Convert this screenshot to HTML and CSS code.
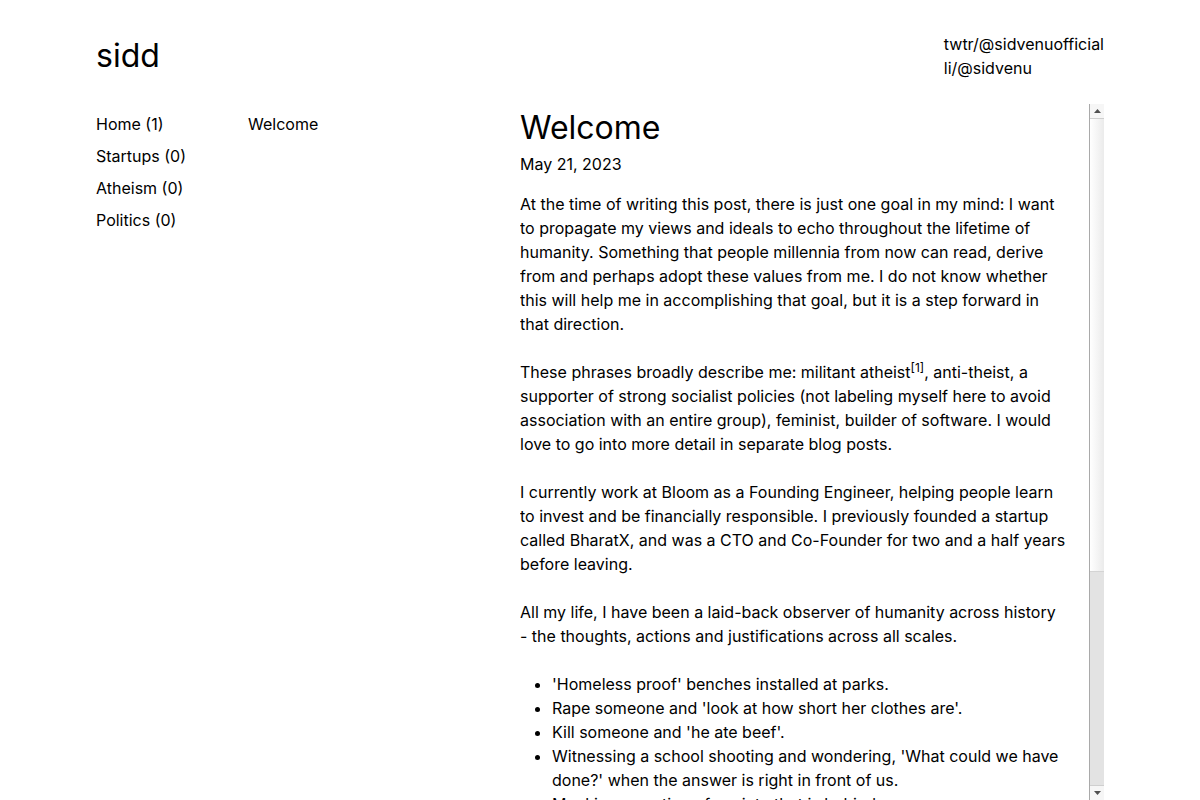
FILE: index.html
```html
<!DOCTYPE html>
<html lang="en">
<head>
<meta charset="utf-8">
<title>sidd</title>
<link rel="stylesheet" href="styles.css">
</head>
<body>
<div class="page">
  <header class="header">
    <div class="brand">sidd</div>
    <div class="social">
      <a class="link" href="#">twtr/@sidvenuofficial</a>
      <a class="link" href="#">li/@sidvenu</a>
    </div>
  </header>
  <div class="main">
    <nav class="nav">
      <a class="link" href="#">Home (1)</a>
      <a class="link" href="#">Startups (0)</a>
      <a class="link" href="#">Atheism (0)</a>
      <a class="link" href="#">Politics (0)</a>
    </nav>
    <div class="posts">
      <a class="link" href="#">Welcome</a>
    </div>
    <div class="reader">
      <article class="content">
        <h1 class="title">Welcome</h1>
        <div class="date">May 21, 2023</div>
        <p>At the time of writing this post, there is just one goal in my mind: I want to propagate my views and ideals to echo throughout the lifetime of humanity. Something that people millennia from now can read, derive from and perhaps adopt these values from me. I do not know whether this will help me in accomplishing that goal, but it is a step forward in that direction.</p>
        <p>These phrases broadly describe me: militant atheist<sup class="ref">[1]</sup>, anti-theist, a supporter of strong socialist policies (not labeling myself here to avoid association with an entire group), feminist, builder of software. I would love to go into more detail in separate blog posts.</p>
        <p>I currently work at Bloom as a Founding Engineer, helping people learn to invest and be financially responsible. I previously founded a startup called BharatX, and was a CTO and Co-Founder for two and a half years before leaving.</p>
        <p>All my life, I have been a laid-back observer of humanity across history - the thoughts, actions and justifications across all scales.</p>
        <ul class="list">
          <li>'Homeless proof' benches installed at parks.</li>
          <li>Rape someone and 'look at how short her clothes are'.</li>
          <li>Kill someone and 'he ate beef'.</li>
          <li>Witnessing a school shooting and wondering, 'What could we have done?' when the answer is right in front of us.</li>
          <li>Mocking a section of society that is behind.</li>
        </ul>
        <p>I have had enough of watching. It is time to speak up, and this blog is where I intend to do it, one post at a time, for whoever happens to be reading.</p>
        <p>Thanks for reading. See you in the next one.</p>
        <div class="notes">[1] Militant atheism here means being vocal about atheism, not violence.</div>
      </article>
      <div class="scrollbar" aria-hidden="true">
        <div class="sb-btn sb-up">
          <svg width="7" height="4" viewBox="0 0 7 4"><path d="M0 4 L3.5 0 L7 4 Z" fill="#505050"/></svg>
        </div>
        <div class="sb-thumb"></div>
        <div class="sb-track"></div>
        <div class="sb-btn sb-down">
          <svg width="7" height="4" viewBox="0 0 7 4"><path d="M0 0 L7 0 L3.5 4 Z" fill="#505050"/></svg>
        </div>
      </div>
    </div>
  </div>
</div>
</body>
</html>
```

FILE: styles.css
```css
html, body {
  margin: 0;
  padding: 0;
}
body {
  font-family: Inter, "Noto Sans", sans-serif;
  font-size: 16px;
  line-height: 24px;
  color: #000;
  background: #fff;
}
.page {
  box-sizing: border-box;
  height: 100vh;
  padding: 32px 96px 0;
  display: flex;
  flex-direction: column;
}
.link {
  color: #000;
  text-decoration: none;
}
.header {
  display: flex;
  justify-content: space-between;
  align-items: center;
  height: 48px;
  flex: none;
}
.brand {
  font-size: 32px;
  line-height: 48px;
}
.social {
  display: flex;
  flex-direction: column;
}
.main {
  display: flex;
  flex: 1;
  min-height: 0;
  margin-top: 24px;
}
.nav {
  width: 152px;
  flex: none;
  padding-top: 8px;
  display: flex;
  flex-direction: column;
  gap: 8px;
}
.posts {
  width: 272px;
  flex: none;
  padding-top: 8px;
  display: flex;
  flex-direction: column;
  gap: 8px;
}
.reader {
  flex: 1;
  min-width: 0;
  display: flex;
}
.content {
  flex: 1;
  min-width: 0;
  overflow-y: auto;
  scrollbar-width: none;
  padding-right: 23px;
}
.content::-webkit-scrollbar {
  display: none;
}
.title {
  margin: 0;
  font-size: 32px;
  line-height: 48px;
  font-weight: 400;
}
.date {
  margin-bottom: 16px;
}
.content p {
  margin: 0 0 24px;
}
.ref {
  font-size: 12px;
  line-height: 0;
}
.list {
  margin: 0 0 24px;
  padding-left: 32px;
}
.notes {
  font-size: 14px;
  padding-bottom: 24px;
}
.scrollbar {
  width: 14px;
  flex: none;
  border-left: 1px solid #a9a9a9;
  display: flex;
  flex-direction: column;
  background: #e3e3e3;
}
.sb-btn {
  flex: none;
  background: #f6f6f6;
  display: flex;
  align-items: center;
  justify-content: center;
}
.sb-up {
  border-bottom: 1px solid #cfcfcf;
  height: 14px;
}
.sb-down {
  border-top: 1px solid #cfcfcf;
  height: 14px;
}
.sb-thumb {
  height: 452px;
  flex: none;
  background: linear-gradient(to right, #ffffff, #ebebeb);
  border-bottom: 1px solid #d4d4d4;
}
.sb-track {
  flex: 1;
  background: #e3e3e3;
}
```
